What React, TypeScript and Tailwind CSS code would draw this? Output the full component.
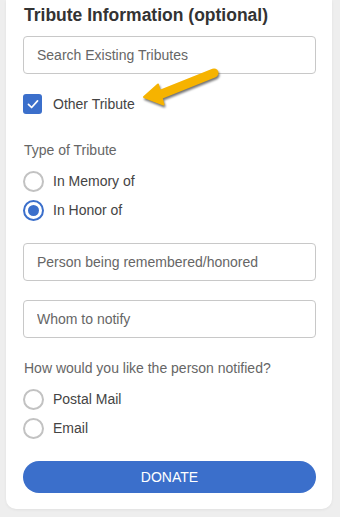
import { useState } from "react";

const font = { fontFamily: '"Liberation Sans", Arial, sans-serif' };

function Radio({ label, checked, onClick }: { label: string; checked: boolean; onClick: () => void }) {
    return (
        <button type="button" onClick={onClick} className="flex items-center gap-[9px] h-[22px] text-left">
            <span
                className={`w-[21px] h-[21px] rounded-full border-2 flex items-center justify-center shrink-0 ${checked ? "border-[#3b6fcb]" : "border-[#c2c2c2]"}`}
            >
                {checked && <span className="w-[11px] h-[11px] rounded-full bg-[#3b6fcb]" />}
            </span>
            <span className="text-[14px] text-[#444]">{label}</span>
        </button>
    );
}

function Field({ placeholder }: { placeholder: string }) {
    return (
        <input
            placeholder={placeholder}
            className="w-full h-[38px] rounded-[4px] border border-[#c8c8c8] px-[13px] text-[14px] text-[#333] placeholder:text-[#666] focus:outline-none"
        />
    );
}

export default function App() {
    const [other, setOther] = useState(true);
    const [type, setType] = useState("honor");
    const [notify, setNotify] = useState("");

    return (
        <div className="relative w-[340px] h-[517px] bg-[#eeeeee] overflow-hidden" style={font}>
            <div className="ml-[6px] w-[326px] h-[509px] bg-white rounded-b-[10px] pl-[17px] pr-[16px] pt-[4px] flex flex-col shadow-[0_1px_3px_rgba(0,0,0,0.06)]">
                <h2 className="text-[17.5px] leading-[22px] font-bold text-[#333] pl-[1px]">Tribute Information (optional)</h2>

                <div className="mt-[10px]">
                    <Field placeholder="Search Existing Tributes" />
                </div>

                <button type="button" onClick={() => setOther(!other)} className="mt-[20px] flex items-center gap-[11px] h-[20px] text-left">
                    <span
                        className={`w-[19px] h-[20px] rounded-[3px] flex items-center justify-center ${other ? "bg-[#3b6fcb]" : "border-2 border-[#c2c2c2]"}`}
                    >
                        {other && (
                            <svg viewBox="0 0 20 20" className="w-[14px] h-[14px]">
                                <path d="M3.5 10.5 L8 15 L16.5 5.5" fill="none" stroke="white" strokeWidth="2.4" strokeLinecap="round" strokeLinejoin="round" />
                            </svg>
                        )}
                    </span>
                    <span className="text-[14px] text-[#444]">Other Tribute</span>
                </button>

                <div className="mt-[26px] h-[20px] leading-[20px] text-[14px] text-[#666] pl-[1px]">Type of Tribute</div>

                <div className="mt-[10px] flex flex-col gap-[7px]">
                    <Radio label="In Memory of" checked={type === "memory"} onClick={() => setType("memory")} />
                    <Radio label="In Honor of" checked={type === "honor"} onClick={() => setType("honor")} />
                </div>

                <div className="mt-[22px]">
                    <Field placeholder="Person being remembered/honored" />
                </div>
                <div className="mt-[19px]">
                    <Field placeholder="Whom to notify" />
                </div>

                <div className="mt-[20px] h-[20px] leading-[20px] text-[14px] text-[#666] pl-[1px]">How would you like the person notified?</div>

                <div className="mt-[10px] flex flex-col gap-[7px]">
                    <Radio label="Postal Mail" checked={notify === "mail"} onClick={() => setNotify("mail")} />
                    <Radio label="Email" checked={notify === "email"} onClick={() => setNotify("email")} />
                </div>

                <button type="button" className="mt-[22px] h-[32px] w-full rounded-full bg-[#3b6fcb] text-white text-[14px]">
                    DONATE
                </button>
            </div>

            {/* annotation arrow */}
            <svg
                className="absolute left-[140px] top-[60px] w-[90px] h-[50px] pointer-events-none"
                viewBox="0 0 90 50"
                style={{ filter: "drop-shadow(1.5px 2px 1px rgba(0,0,0,0.55))" }}
            >
                <line x1="74" y1="13" x2="19" y2="35" stroke="#f6b300" strokeWidth="9" strokeLinecap="round" />
                <polygon points="4,37 18,24.5 23.5,44.5" fill="#f6b300" stroke="#f6b300" strokeWidth="2" strokeLinejoin="round" />
            </svg>
        </div>
    );
}
